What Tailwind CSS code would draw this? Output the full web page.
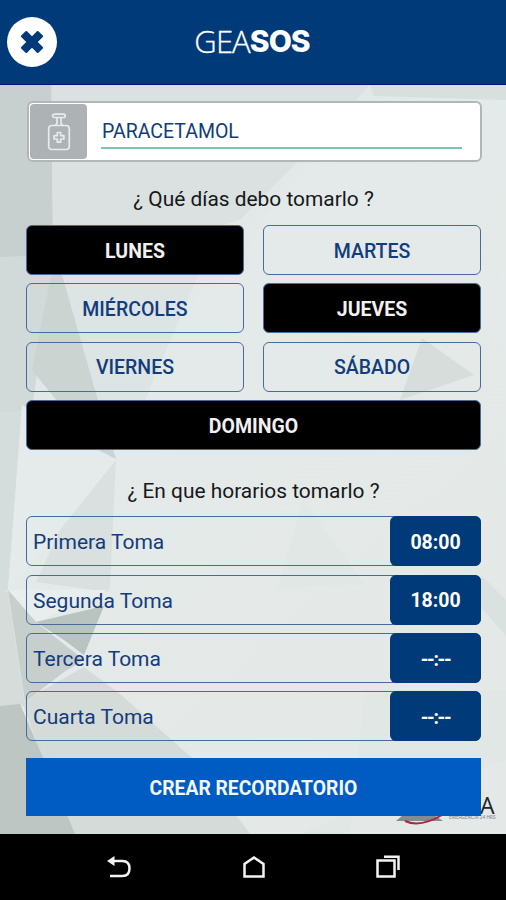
<!DOCTYPE html>
<html lang="es">
<head>
<meta charset="utf-8">
<title>GEASOS</title>
<script src="https://cdn.jsdelivr.net/npm/@tailwindcss/browser@4"></script>
</head>
<body class="w-[506px] h-[900px] overflow-hidden flex flex-col bg-black font-['Roboto',sans-serif] text-[20px] leading-none text-[#123c7c]">
<header class="h-[85px] shrink-0 bg-[#003a79] border-b border-[#10107a] grid grid-cols-[1fr_auto_1fr] items-center pl-[7px] pr-[7px]">
  <button class="size-[50px] rounded-full bg-white flex items-center justify-center" aria-label="Cerrar">
    <svg class="size-6" viewBox="0 0 24 24" fill="#003a79"><path d="M1.2 5.6 5.600 1.200Q6.300.6 7 1.200L12 6.200 17 1.200Q17.700.6 18.400 1.200L22.800 5.600Q23.400 6.300 22.800 7L17.800 12 22.800 17Q23.400 17.700 22.800 18.400L18.400 22.800Q17.700 23.400 17 22.800L12 17.800 7 22.800Q6.300 23.400 5.600 22.800L1.200 18.400Q.6 17.700 1.200 17L6.200 12 1.200 7Q.6 6.300 1.200 5.600Z"/></svg>
  </button>
  <h1 class="flex items-center text-white text-[31px] pb-[2px] -ml-[2px]"><span class="font-['Open_Sans',sans-serif] font-light tracking-[-0.9px] [-webkit-text-stroke:0.3px_white]">GEA</span><span class="font-['Inter',sans-serif] font-extrabold text-[30px] tracking-[-1px]">SOS</span></h1>
</header>
<main class="relative h-[749px] shrink-0 px-[26px] pt-4 bg-[#e4e9e9] overflow-hidden">
  <svg class="absolute inset-0 w-[506px] h-[749px]" viewBox="0 85 506 749" preserveAspectRatio="none">
    <defs>
      <linearGradient id="sky" x1="0" y1="0" x2=".6" y2="1"><stop offset="0" stop-color="#d6dddc"/><stop offset=".4" stop-color="#e4eae9"/><stop offset="1" stop-color="#e4e9e7"/></linearGradient>
    </defs>
    <path fill="url(#sky)" d="M0 85H506V834H0Z"/>
    <path fill="#c8d0cf" d="M0 85H51L53 256 0 257Z"/>
    <path fill="#d2d9d9" d="M0 257H53L32 410 0 414Z"/>
    <path fill="#dae1e0" d="M53 85H370L295 164 240 220 53 275Z"/>
    <path fill="#dde4e4" d="M62 275 200 270 145 400 98 400Z"/>
    <path fill="#ccd4d2" d="M53 265 62 275 98 400 116 459 96 449 32 370Z"/>
    <path fill="#e5eaea" d="M295 164 350 160H420L455 225 506 290V350L400 260 240 262Z" opacity=".6"/>
    <path fill="#d8e0de" d="M370 85H506V100L374 96Z"/>
    <path fill="#d6dddb" d="M422 338 474 375 400 400Z"/>
    <path fill="#d5dddc" d="M0 412 22 412 8 590 0 594Z"/>
    <path fill="#e5eaea" d="M22 405 98 450 116 460 60 530 8 590Z"/>
    <path fill="#d9e0df" d="M116 460 110 585 108 592 36 582 60 530Z"/>
    <path fill="#e8eded" d="M8 590 108 590 36 622Z"/>
    <path fill="#b9c3c0" d="M36 622 104 606 84 655 64 640Z"/>
    <path fill="#c6cfcc" d="M8 590 36 622 84 660 64 672 25 702Z"/>
    <path fill="#d5dcda" d="M0 593 8 591 25 706 0 706Z"/>
    <path fill="#d4dbd9" d="M84 667 120 694 200 765 250 834H70L22 702Z"/>
    <path fill="#bdc6c2" d="M0 706 20 704 42 755 75 834H0Z"/>
    <path fill="#dfe5e3" d="M303 500 365 584 278 588Z" opacity=".7"/>
    <path fill="#d9e2de" d="M481 575 506 600V636L475 600Z"/>
    <path fill="#dce3e0" d="M365 690H506V760L380 800 300 834H350Z" opacity=".4"/>
  </svg>
  <div class="absolute left-[396px] top-[706px] w-[110px] h-[43px]">
    <svg class="absolute inset-0 w-[110px] h-[43px]" viewBox="396 791 110 43"><path fill="#868b8f" d="M396 821Q416 800 443 821Z"/><path d="M405 821Q420 828 442 815" fill="none" stroke="#a32b42" stroke-width="2"/></svg>
    <span class="absolute left-[84px] top-[4px] font-['Open_Sans',sans-serif] text-[23px] leading-[20px] text-[#20242c]">A</span>
    <span class="absolute left-[53px] top-[25px] text-[4.800px] leading-none text-[#7d868a] whitespace-nowrap">EMERGENCIA 24 HRS</span>
  </div>
  <div class="relative flex flex-col">
    <label class="h-[61px] ml-px w-[455px] bg-white border-2 border-[#b1b6b8] rounded-[6px] p-px flex">
      <span class="w-[57px] bg-[#adb2b5] rounded-[4px] flex items-center justify-center">
        <svg class="w-6 h-10" viewBox="0 0 24 40" fill="none" stroke="#e9ecee" stroke-width="1.700" stroke-linejoin="round"><path d="M5.500 3.500Q6 2.200 8 2.200H16.500Q18.500 2.500 18.300 4.200L17.500 5.500H7Q5.500 5 5.500 3.500ZM10 5.500V11.500L8 13.500M14 5.500V11.500L16 13.500M5 13.500H19Q22.300 13.500 22.300 17V34Q22.300 37.500 19 37.500H5Q1.700 37.500 1.700 34V17Q1.700 13.500 5 13.500ZM10.300 20.500H13.700V23.700H16.900V27H13.700V30.200H10.300V27H7.100V23.700H10.300Z"/></svg>
      </span>
      <span class="ml-[14px] mt-[12px] w-[361px] h-[33px] border-b-2 border-[#7fc4b3] pt-[6px] pl-px text-[19.500px]">PARACETAMOL</span>
    </label>
    <h2 class="h-[63px] pt-[27px] pl-px text-center text-[20.900px] text-[#161819]">¿ Qué días debo tomarlo ?</h2>
    <div class="grid grid-cols-2 gap-x-[19px] gap-y-[8.300px] w-[455px] font-medium text-[19.500px] [&>button]:h-[50px] [&>button]:pt-[3px] [&>button]:border-[1.500px] [&>button]:border-[#476c9b] [&>button]:rounded-[6px]">
      <button class="bg-black text-[#f1f1f1] font-bold">LUNES</button>
      <button>MARTES</button>
      <button>MIÉRCOLES</button>
      <button class="bg-black text-[#f1f1f1] font-bold">JUEVES</button>
      <button>VIERNES</button>
      <button>SÁBADO</button>
      <button class="col-span-2 bg-black text-[#f1f1f1] font-bold">DOMINGO</button>
    </div>
    <h2 class="h-[66.500px] pt-[31px] pl-px text-center text-[20.900px] text-[#161819]">¿ En que horarios tomarlo ?</h2>
    <div class="flex flex-col gap-[8.300px] w-[455px] text-[21px] [&>div]:h-[50px] [&>div]:border [&>div]:border-[#476c9b] [&>div]:rounded-[6px] [&>div]:flex [&>div]:items-center [&>div]:justify-between [&>div]:pl-[6px] [&_span]:pt-[3px] [&_b]:pt-[3px] [&_b]:w-[91px] [&_b]:h-[50px] [&_b]:-mr-px [&_b]:bg-[#003a79] [&_b]:rounded-[6px] [&_b]:text-white [&_b]:text-[19.500px] [&_b]:flex [&_b]:items-center [&_b]:justify-center">
      <div><span>Primera Toma</span><b>08:00</b></div>
      <div><span>Segunda Toma</span><b>18:00</b></div>
      <div><span>Tercera Toma</span><b class="tracking-[-1.300px]">--:--</b></div>
      <div><span>Cuarta Toma</span><b class="tracking-[-1.300px]">--:--</b></div>
    </div>
    <button class="mt-[16.500px] pt-[3px] w-[455px] h-[58px] bg-[#005bc3] text-[#f5f8ff] text-[19.300px] font-bold">CREAR RECORDATORIO</button>
  </div>
</main>
<nav class="h-[66px] pl-[107px] pr-[105px] pt-px flex items-center justify-between">
  <svg class="size-[26px]" viewBox="0 0 26 26" fill="none" stroke="#f3f3f3" stroke-width="2.500"><path d="M7 6H15.500Q22.500 6 22.500 13.500T15.500 21H3"/><path d="M0 6 7.500 1V11Z" fill="#f3f3f3" stroke="none"/></svg>
  <svg class="size-[26px]" viewBox="0 0 26 26" fill="none" stroke="#f3f3f3" stroke-width="2.500"><path d="M3.500 21.500V9L13 2.500 22.500 9V21.500Z"/></svg>
  <svg class="size-[26px]" viewBox="0 0 26 26" fill="none" stroke="#f3f3f3" stroke-width="2.500"><path d="M2.500 5.500H19.500V21.500H2.500ZM9 1.700H23.500V15"/></svg>
</nav>
</body>
</html>
